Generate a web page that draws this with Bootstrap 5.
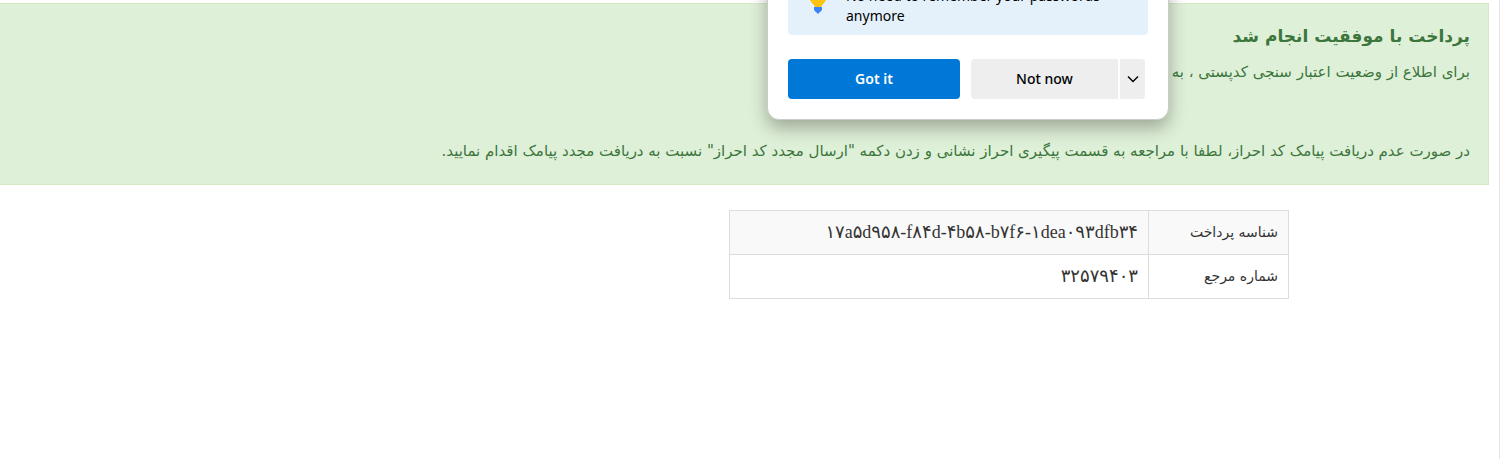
<!DOCTYPE html>
<html lang="fa" dir="rtl">
<head>
<meta charset="utf-8">
<meta name="viewport" content="width=device-width, initial-scale=1">
<title>پرداخت</title>
<link href="https://cdn.jsdelivr.net/npm/bootstrap@5.3.0/dist/css/bootstrap.min.css" rel="stylesheet">
<style>
body { font-family: "DejaVu Sans", sans-serif; color: #333; background: #fff; overflow: hidden; }
.page-shell { border-right: 1px solid #e3e3e3; margin-right: 1px; padding: 3px 10px 0 0; }
.pay-notice { height: 182px; background: #dff0d8; border: 1px solid #d6e9c6; border-left: 0; border-radius: 0; color: #3c763d; padding: 16px 18px; font-size: 15px; line-height: 24px; }
.pay-notice h1 { font-size: 17px; line-height: 32px; font-weight: 700; margin-bottom: 8px; }
.pay-notice p { margin-bottom: 55px; }
.receipt { width: 560px; margin: 25px 200px 0 0; font-size: 14px; line-height: 23px; --bs-table-striped-bg: #f9f9f9; --bs-table-striped-color: #333; --bs-table-color: #333; --bs-table-bg: #fff; border-color: #ddd; }
.receipt > tbody > tr > * { padding: 10px; font-weight: 400; text-align: right; vertical-align: middle; }
.receipt th { width: 140px; }
.receipt bdi { display: block; line-height: 23px; font-family: "Liberation Serif", "DejaVu Sans", serif; font-size: 18px; }
.pw-dialog { top: -41px; left: 767px; width: 402px; padding: 20px; background: #fff; border: 1px solid #c8cec5; border-radius: 12px; box-shadow: 0 8px 18px rgba(0,0,0,.3); font-family: "Noto Sans", sans-serif; font-size: 14px; line-height: 20px; color: #000; }
.pw-tip { margin-bottom: 24px; padding: 6px 16px 8px; height: 55px; background: #e4f1fb; border-radius: 4px; gap: 14px; }
.pw-tip p { margin: 0; }
.pw-dialog .btn { --bs-btn-border-width: 0; height: 40px; padding: 0 0 2px; font-size: 14px; border-radius: 4px; }
.pw-ok { width: 172px; background: #0078d7; color: #fff; font-weight: 600; margin-right: 11px; }
.pw-no { width: 147px; background: #eee; color: #000; font-weight: 500; }
.pw-more { width: 25px; background: #eee; color: #000; }
.pw-split { gap: 2px; }
.pw-dialog .pw-no { border-radius: 4px 0 0 4px; }
.pw-dialog .pw-more { border-radius: 0 4px 4px 0; padding: 0; }
</style>
</head>
<body>
<main class="page-shell min-vh-100">
  <section class="pay-notice alert mb-0" role="alert">
    <h1>پرداخت با موفقیت انجام شد</h1>
    <p>برای اطلاع از وضعیت اعتبار سنجی کدپستی ، به</p>
    <div>در صورت عدم دریافت پیامک کد احراز، لطفا با مراجعه به قسمت پیگیری احراز نشانی و زدن دکمه "ارسال مجدد کد احراز" نسبت به دریافت مجدد پیامک اقدام نمایید.</div>
  </section>
  <table class="table table-bordered table-striped receipt">
    <tbody>
      <tr><th scope="row">شناسه پرداخت</th><td><bdi dir="ltr">۱۷a۵d۹۵۸-f۸۴d-۴b۵۸-b۷f۶-۱dea۰۹۳dfb۳۴</bdi></td></tr>
      <tr><th scope="row">شماره مرجع</th><td><bdi dir="ltr">۳۲۵۷۹۴۰۳</bdi></td></tr>
    </tbody>
  </table>
</main>
<aside class="pw-dialog position-absolute" dir="ltr" lang="en">
  <div class="pw-tip d-flex">
    <svg class="flex-shrink-0" width="28" height="28" viewBox="0 0 28 28" aria-hidden="true"><path d="M14 2a9 9 0 0 0-6 15q2 2 3 4h6q1-2 3-4a9 9 0 0 0-6-15z" fill="#ffc20e"/><path d="M10 21h8v2q0 2-2 3l-2 2-2-2q-2-1-2-3z" fill="#3b82f6"/></svg>
    <p>No need to remember your passwords anymore</p>
  </div>
  <div class="d-flex">
    <button class="btn pw-ok" type="button">Got it</button>
    <div class="d-flex pw-split">
      <button class="btn pw-no" type="button">Not now</button>
      <button class="btn pw-more d-flex align-items-center justify-content-center" type="button" aria-label="More options"><svg width="12" height="8" viewBox="0 0 12 8" fill="none" stroke="#000" stroke-width="1.4"><path d="M1 1.5l5 5 5-5"/></svg></button>
    </div>
  </div>
</aside>
<script src="https://cdn.jsdelivr.net/npm/bootstrap@5.3.0/dist/js/bootstrap.bundle.min.js"></script>
</body>
</html>
